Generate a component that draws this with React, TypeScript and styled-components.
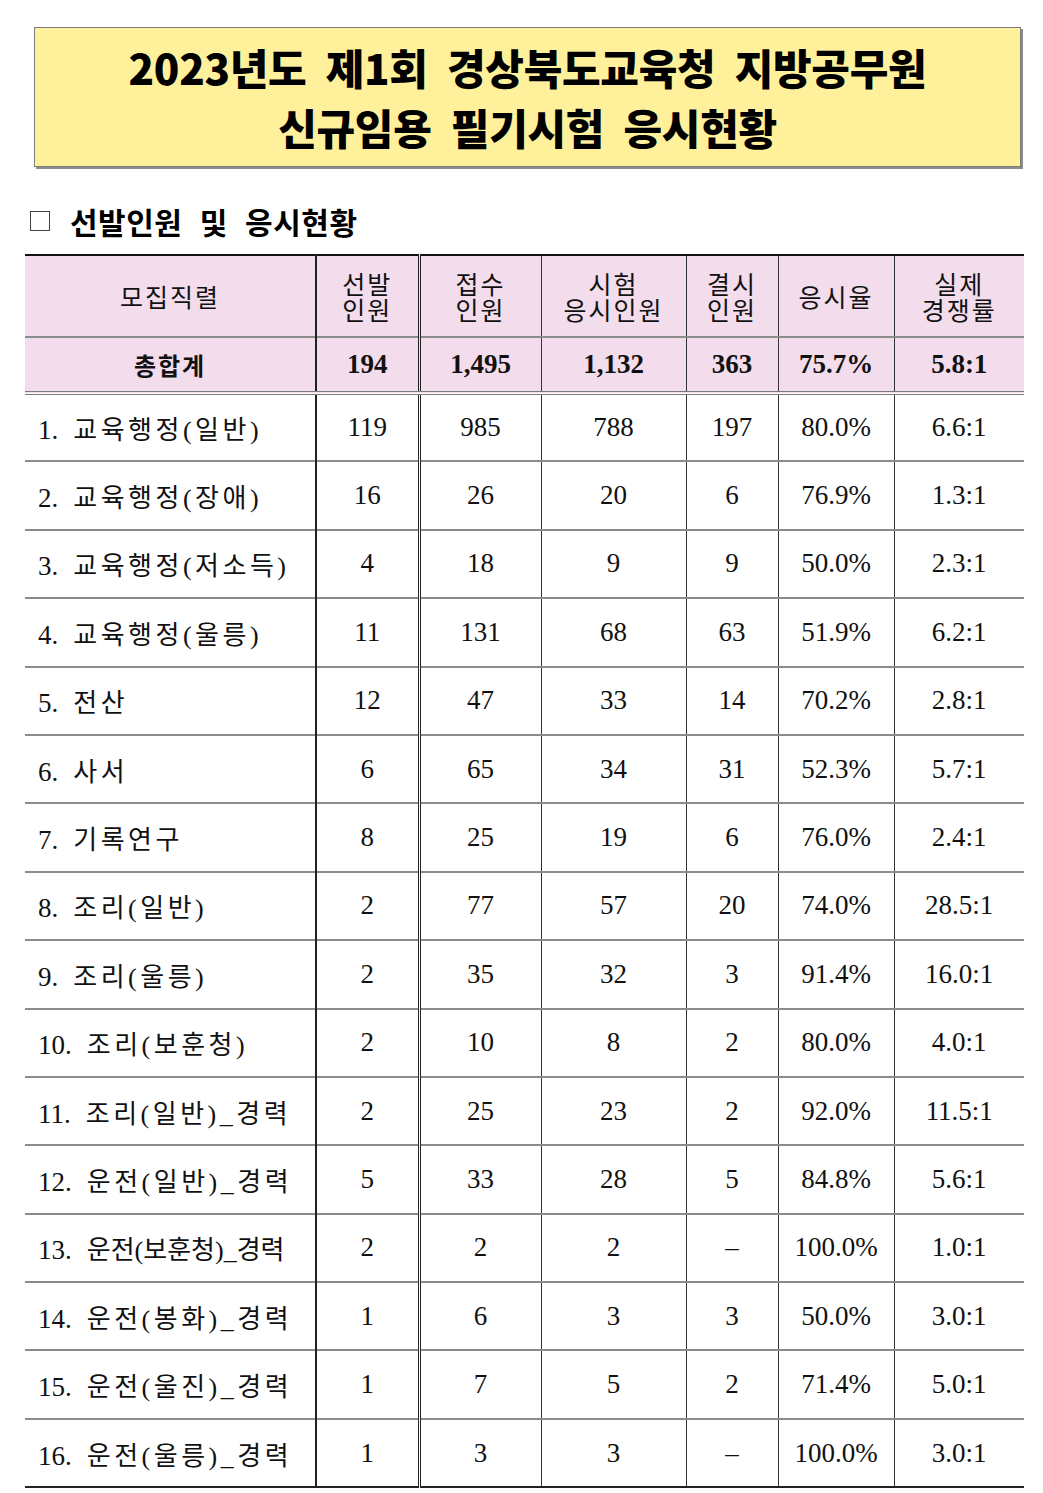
import React from "react";
import styled, { createGlobalStyle } from "styled-components";

const GlobalStyle = createGlobalStyle`
  body {
    margin: 0;
    background: #ffffff;
  }
`;

const Page = styled.div`
  width: 1043px;
  padding: 27px 19px 0 25px;
  box-sizing: border-box;
  font-family: "Liberation Serif", "Noto Sans CJK KR", serif;
  color: #111;
`;

const TitleBox = styled.div`
  margin-left: 9px;
  width: 987px;
  height: 140px;
  box-sizing: border-box;
  background: #fff09c;
  border: 1px solid #7d7d7d;
  box-shadow: 2px 2px 0 #8c8c8c;
  display: flex;
  flex-direction: column;
  align-items: center;
  justify-content: center;
  gap: 8px;
`;

const TitleLine = styled.div`
  font-family: "Noto Sans CJK KR", sans-serif;
  font-weight: 900;
  font-size: 42px;
  line-height: 52px;
  letter-spacing: -0.3px;
  word-spacing: 10px;
  color: #000;
`;

const SectionHeading = styled.div`
  display: flex;
  align-items: center;
  gap: 20px;
  margin: 36px 0 15px 5px;
  font-family: "Noto Sans CJK KR", sans-serif;
  font-weight: 700;
  font-size: 30px;
  line-height: 36px;
  letter-spacing: 0.5px;
  word-spacing: 10px;
  color: #000;
`;

const CheckBox = styled.span`
  width: 20px;
  height: 20px;
  border: 1.5px solid #444;
  box-sizing: border-box;
  display: inline-block;
`;

const Table = styled.table`
  width: 999px;
  border-collapse: collapse;
  table-layout: fixed;
  border-top: 2px solid #111;
  border-bottom: 2px solid #222;
`;

const Col = styled.col<{ $w: number }>`
  width: ${({ $w }) => $w}px;
`;

const Row = styled.tr<{ $h: number; $pink?: boolean; $double?: boolean }>`
  height: ${({ $h }) => $h}px;
  background: ${({ $pink }) => ($pink ? "#f3dcec" : "#ffffff")};
  border-bottom: ${({ $double }) =>
    $double ? "4px double #7a7a7a" : "2px solid #8c8c8c"};
  &:last-child {
    border-bottom: none;
  }
`;

const lineFor = (idx: number) =>
  idx === 0
    ? "2px solid #222"
    : idx === 1
    ? "3px double #222"
    : idx === 6
    ? "none"
    : "1px solid #333";

const Cell = styled.td<{ $idx: number; $left?: boolean; $bold?: boolean }>`
  padding: 0;
  padding-left: ${({ $left }) => ($left ? "13px" : "0")};
  text-align: ${({ $left }) => ($left ? "left" : "center")};
  font-size: 27px;
  font-weight: ${({ $bold }) => ($bold ? 700 : 400)};
  white-space: nowrap;
  vertical-align: middle;
  border-right: ${({ $idx }) => lineFor($idx)};
`;

const HeadCell = styled.th<{ $idx: number }>`
  padding: 0;
  text-align: center;
  font-weight: 400;
  font-family: "Noto Sans CJK KR", sans-serif;
  font-size: 25px;
  line-height: 26px;
  letter-spacing: 2px;
  white-space: pre-line;
  vertical-align: middle;
  border-right: ${({ $idx }) => lineFor($idx)};
`;

const JobName = styled.span<{ $tight?: boolean }>`
  display: inline-block;
  margin-left: 15px;
  font-family: "Liberation Serif", "Noto Sans CJK KR", serif;
  font-size: 26px;
  letter-spacing: ${({ $tight }) => ($tight ? "0" : "3.5px")};
`;

const TotalLabel = styled.span`
  display: block;
  text-align: center;
  font-family: "Noto Sans CJK KR", sans-serif;
  font-weight: 700;
  font-size: 24px;
  letter-spacing: 2px;
`;

const widths = [291, 103, 122, 145, 92, 116, 130];

const headers = [
  "모집직렬",
  "선발\n인원",
  "접수\n인원",
  "시험\n응시인원",
  "결시\n인원",
  "응시율",
  "실제\n경쟁률",
];

const rows: string[][] = [
  ["1.", "교육행정(일반)", "119", "985", "788", "197", "80.0%", "6.6:1"],
  ["2.", "교육행정(장애)", "16", "26", "20", "6", "76.9%", "1.3:1"],
  ["3.", "교육행정(저소득)", "4", "18", "9", "9", "50.0%", "2.3:1"],
  ["4.", "교육행정(울릉)", "11", "131", "68", "63", "51.9%", "6.2:1"],
  ["5.", "전산", "12", "47", "33", "14", "70.2%", "2.8:1"],
  ["6.", "사서", "6", "65", "34", "31", "52.3%", "5.7:1"],
  ["7.", "기록연구", "8", "25", "19", "6", "76.0%", "2.4:1"],
  ["8.", "조리(일반)", "2", "77", "57", "20", "74.0%", "28.5:1"],
  ["9.", "조리(울릉)", "2", "35", "32", "3", "91.4%", "16.0:1"],
  ["10.", "조리(보훈청)", "2", "10", "8", "2", "80.0%", "4.0:1"],
  ["11.", "조리(일반)_경력", "2", "25", "23", "2", "92.0%", "11.5:1"],
  ["12.", "운전(일반)_경력", "5", "33", "28", "5", "84.8%", "5.6:1"],
  ["13.", "운전(보훈청)_경력", "2", "2", "2", "–", "100.0%", "1.0:1"],
  ["14.", "운전(봉화)_경력", "1", "6", "3", "3", "50.0%", "3.0:1"],
  ["15.", "운전(울진)_경력", "1", "7", "5", "2", "71.4%", "5.0:1"],
  ["16.", "운전(울릉)_경력", "1", "3", "3", "–", "100.0%", "3.0:1"],
];

const totals = ["194", "1,495", "1,132", "363", "75.7%", "5.8:1"];

// names that would overflow the first column get no extra letter spacing
const countHangul = (s: string) => (s.match(/[가-힣]/g) || []).length;
const isLong = (s: string) => s.length >= 10 && countHangul(s) >= 7;

export default function App() {
  return (
    <Page>
      <GlobalStyle />
      <TitleBox>
        <TitleLine>2023년도 제1회 경상북도교육청 지방공무원</TitleLine>
        <TitleLine>신규임용 필기시험 응시현황</TitleLine>
      </TitleBox>

      <SectionHeading>
        <CheckBox />
        <span>선발인원 및 응시현황</span>
      </SectionHeading>

      <Table>
        <colgroup>
          {widths.map((w, i) => (
            <Col key={i} $w={w} />
          ))}
        </colgroup>
        <tbody>
          <Row $h={82} $pink>
            {headers.map((h, i) => (
              <HeadCell key={i} $idx={i}>
                {h}
              </HeadCell>
            ))}
          </Row>
          <Row $h={56} $pink $double>
            <Cell $idx={0} $bold>
              <TotalLabel>총합계</TotalLabel>
            </Cell>
            {totals.map((t, i) => (
              <Cell key={i} $idx={i + 1} $bold>
                {t}
              </Cell>
            ))}
          </Row>
          {rows.map((r, ri) => (
            <Row key={ri} $h={68.4}>
              <Cell $idx={0} $left>
                {r[0]}
                <JobName $tight={isLong(r[1])}>{r[1]}</JobName>
              </Cell>
              {r.slice(2).map((v, i) => (
                <Cell key={i} $idx={i + 1}>
                  {v}
                </Cell>
              ))}
            </Row>
          ))}
        </tbody>
      </Table>
    </Page>
  );
}
